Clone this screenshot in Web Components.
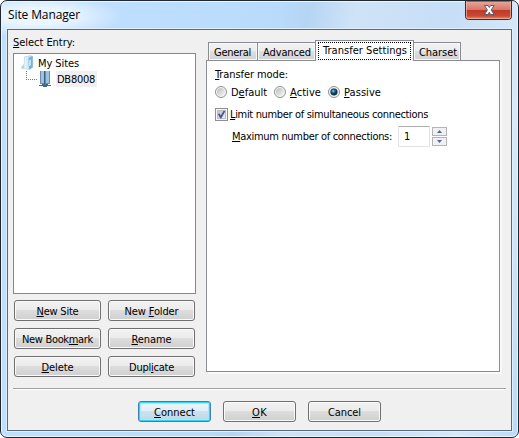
<!DOCTYPE html>
<html lang="en"><head><meta charset="utf-8"><title>Site Manager</title>
<style>html,body{margin:0;width:519px;height:438px;overflow:hidden;background:#fff}</style></head>
<body><site-manager></site-manager>
<script>
const define=(name,html,setup)=>customElements.define(name,class extends HTMLElement{
  connectedCallback(){
    if(this.shadowRoot)return;
    this.attachShadow({mode:'open'}).innerHTML=html;
    if(setup)setup(this,this.shadowRoot);
  }
});

/* Single-line label: tracks its text to the width in "w"; "_" precedes the access key. */
define('ui-label',`<style>:host{display:block;font:11px/16px "DejaVu Sans Condensed","DejaVu Sans",sans-serif;font-stretch:condensed;color:#000;white-space:pre;height:14px}
:host([title-text]){font:12px/16px "Open Sans",sans-serif;height:16px}
span{display:inline-block}u{text-decoration:underline;text-decoration-thickness:1px;text-underline-offset:1px;text-decoration-skip-ink:none}</style><span></span>`,(el,r)=>{
  const s=r.querySelector('span'),t=el.getAttribute('text')||'',w=+el.getAttribute('w');
  s.innerHTML=t.replace(/_(.)/,'<u>$1</u>');
  const n=t.replace('_','').length;
  if(n>1&&w)s.style.letterSpacing=((w-s.getBoundingClientRect().width)/n).toFixed(3)+'px';
  if(w)el.style.width=w+'px';
});

define('ui-button',`<style>:host{display:flex;box-sizing:border-box;height:21px;justify-content:center;padding-top:3px;border:1px solid #707070;border-radius:3px;background:linear-gradient(#f2f2f2,#ebebeb 48%,#dddddd 50%,#cfcfcf);box-shadow:inset 0 0 0 1px #fafafa}
:host([default]){border-color:#3c7fb1;background:linear-gradient(#edf5f9,#e1eff6 48%,#cce3ee 50%,#b9d7e5);box-shadow:inset 0 0 0 1px #35d3f8,inset 0 0 1px 2px #a8e7f8}</style>`,(el,r)=>{
  const l=document.createElement('ui-label');l.setAttribute('text',el.getAttribute('text'));l.setAttribute('w',el.getAttribute('w'));
  r.append(l);
});

define('ui-tab',`<style>:host{display:block;box-sizing:border-box;height:18px;padding:2px 0 0 5px;border:1px solid #898c95;border-bottom:0;margin-left:-1px;background:linear-gradient(#f3f3f3,#ececec 48%,#dfdfdf 50%,#d2d2d2);box-shadow:inset 0 0 0 1px #f7f7f7}
:host([active]){height:21px;padding:1px 2px 2px;background:#fff;z-index:1;margin-bottom:-1px}
:host([active]) div{box-sizing:border-box;height:18px;border:1px dotted #000;padding:0 0 0 4px}</style><div><slot></slot></div>`);

define('ui-radio',`<style>:host{display:flex;gap:4px;height:14px}svg{width:12px;height:12px;margin-top:1px;flex:none}.dot{display:none}:host([checked]) .dot{display:inline}</style>
<svg viewBox="0 0 12 12"><defs><linearGradient id="a" x2="1" y2="1"><stop stop-color="#b8bcc0"/><stop offset="1" stop-color="#f6f6f6"/></linearGradient><radialGradient id="b" cx=".4" cy=".35"><stop stop-color="#9be8ff"/><stop offset=".4" stop-color="#25799f"/><stop offset="1" stop-color="#0b2b48"/></radialGradient></defs><circle cx="6" cy="6" r="5.5" fill="#f7f7f7" stroke="#8e8f8f"/><circle cx="6" cy="6" r="4" fill="url(#a)"/><circle class="dot" cx="6" cy="6" r="3.3" fill="url(#b)" stroke="#15344d" stroke-width=".5"/></svg><slot></slot>`);

define('ui-check',`<style>:host{display:flex;gap:2px;height:14px}svg{width:13px;height:13px;flex:none}</style>
<svg viewBox="0 0 13 13"><defs><linearGradient id="c" x2="1" y2="1"><stop stop-color="#b9bdc4"/><stop offset="1" stop-color="#f4f4f4"/></linearGradient></defs><rect x=".5" y=".5" width="12" height="12" fill="#f6f6f6" stroke="#8e8f8f"/><rect x="2.5" y="2.5" width="8" height="8" fill="url(#c)" stroke="#bcc0c6"/><path d="M3 6.3 4.4 5.3 5.8 7.5 8.8 2.4 10.3 3.2 6.2 10.4 5.3 10.4Z" fill="#40559a"/></svg><slot></slot>`);

define('ui-spinner',`<style>:host{display:grid;grid-template-columns:32px 15px;gap:2px;height:21px}.field{box-sizing:border-box;height:21px;border:1px solid #e2e3ea;border-top-color:#abadb3;border-radius:1px;padding:2px 0 0 5px;background:#fff}.steps{display:grid;grid-template-rows:9px 9px;gap:1px;margin-top:1px;height:19px}svg{display:block;width:15px;height:9px}</style>
<div class="field"><slot></slot></div><div class="steps"><svg viewBox="0 0 15 9"><rect x=".5" y=".5" width="14" height="8" fill="#f1f1f1" stroke="#b4b4b4"/><path d="M5 6 7.5 3 10 6Z" fill="#4565b5"/></svg><svg viewBox="0 0 15 9"><rect x=".5" y=".5" width="14" height="8" fill="#f1f1f1" stroke="#b4b4b4"/><path d="M5 3 7.5 6 10 3Z" fill="#4565b5"/></svg></div>`);

define('site-tree',`<style>:host{display:block;box-sizing:border-box;height:241px;border:1px solid #828790;background:#fff}
.row{display:flex;height:16px}.root{padding:1px 0 0 7px;gap:3px}.root ui-label{margin-top:1px}.child{padding-left:12px}.child svg{margin-right:2px}.sel{background:#f0f0f0;height:16px;width:41px;padding:1px 0 0 1px;box-sizing:border-box}svg{flex:none}</style>
<div class="row root"><svg width="14" height="16" viewBox="0 0 14 16"><defs><linearGradient id="f"><stop stop-color="#f5fbff"/><stop offset=".6" stop-color="#c5e0f1"/><stop offset="1" stop-color="#8fc0e2"/></linearGradient></defs><path d="M0 12 3 9 3 2 6 1 6 13 1 14Z" fill="#b6d4e8"/><path d="M3.5 2 9.5.5 11.5 1.5V12.5L8 14.5 3 13.5Z" fill="url(#f)" stroke="#b4d2e7" stroke-width=".5"/><path d="M7.5 3 11.7 1V12.5L8 14.7Z" fill="#7ab2da"/><path d="M8 5.5 10 4.5V10L8 11.5Z" fill="#c0e2f5"/></svg><ui-label text="My Sites" w="41"></ui-label></div>
<div class="row child"><svg width="28" height="16" viewBox="0 0 28 16"><path d="M.5 0V9M2 8.5H12" fill="none" stroke="#777" stroke-dasharray="1 1"/><rect x="14" y="0" width="10" height="13" fill="#688eae"/><path d="M15 0H18V12H15ZM20 0H23V12H20Z" fill="#9dc2df"/><path d="M18.5 0V14" stroke="#365f82"/><path d="M13 14.5H25M16 13.5H22M17 15.5H21" stroke="#426a8a"/></svg><div class="sel"><ui-label text="DB8008" w="38"></ui-label></div></div>`);

define('settings-panel',`<style>:host{display:block;padding:10px 0 0 10px}.tabs{display:flex;align-items:flex-end;height:20px;padding-left:3px;position:relative}
.general{width:50px}.advanced{width:59px}.active{width:99px}.charset{width:48px}
.panel{box-sizing:border-box;width:294px;height:312px;border:1px solid #898c95;background:#fff;box-shadow:2px 2px 0 #fafafa;padding:6px 0 0 8px}.radios{display:flex;margin-top:4px;height:14px}.radios ui-radio:nth-child(1){width:59px}.radios ui-radio:nth-child(2){width:54px}.radios svg{margin-top:2px}.check{margin-top:9px}.count{display:flex;margin:4px 0 0 17px;gap:6px}.count>ui-label{margin-top:3px}.check ui-label{margin-top:-1px}</style>
<div class="tabs"><ui-tab class="general"><ui-label text="General" w="37"></ui-label></ui-tab><ui-tab class="advanced"><ui-label text="Advanced" w="48"></ui-label></ui-tab><ui-tab active class="active"><ui-label text="Transfer Settings" w="84"></ui-label></ui-tab><ui-tab class="charset"><ui-label text="Charset" w="38"></ui-label></ui-tab></div>
<div class="panel"><ui-label text="_Transfer mode:" w="73"></ui-label><div class="radios"><ui-radio><ui-label text="D_efault" w="36"></ui-label></ui-radio><ui-radio><ui-label text="_Active" w="31"></ui-label></ui-radio><ui-radio checked><ui-label text="_Passive" w="37"></ui-label></ui-radio></div>
<ui-check class="check"><ui-label text="_Limit number of simultaneous connections" w="198"></ui-label></ui-check>
<div class="count"><ui-label text="_Maximum number of connections:" w="160"></ui-label><ui-spinner><ui-label text="1"></ui-label></ui-spinner></div></div>`);

define('site-manager',`<style>:host{display:block;box-sizing:border-box;width:519px;height:438px;border:1px solid #1f2731;border-radius:7px;padding:0 6px 6px;box-shadow:inset 0 0 0 1px #e9f6ff;background:radial-gradient(ellipse 85px 22px at 36px 15px,#e9f5ff 40%,transparent),linear-gradient(100deg,#bfdfff 0 15%,#b8dbfc 47%,#b5d5f3 52%,#cfe3f7 60%,#c6def6 76%,#d7e9fb 90%,#b9dafa)}
header{height:28px;display:flex;justify-content:space-between}header ui-label{margin:6px 0 0 1px}header svg{width:48px;height:20px}
main{box-sizing:border-box;width:505px;height:402px;background:#f0f0f0;border:1px solid #5d6b79;box-shadow:0 0 0 1px #e0effc;padding:0 5px}
.body{display:grid;grid-template-columns:183px 1fr;padding-top:0;height:358px}.left{padding-top:5px}.left site-tree{margin-top:4px}.grid{display:grid;grid-template-columns:87px 87px;column-gap:7px;row-gap:7px;margin:6px 0 0 1px}
.left ui-button{height:21px}.line{height:1px;background:#a0a0a0;box-shadow:0 1px #fff}.actions{display:grid;grid-template-columns:73px 73px 73px;gap:12px;justify-content:start;margin:12px 0 0 125px}</style>
<header><ui-label title-text text="Site Manager" w="72"></ui-label><svg viewBox="0 0 48 20"><defs><linearGradient id="r" x2="0" y2="1"><stop stop-color="#e9aa9c"/><stop offset=".46" stop-color="#d6786a"/><stop offset=".48" stop-color="#bd392a"/><stop offset=".8" stop-color="#c94732"/><stop offset="1" stop-color="#ec9270"/></linearGradient></defs><path d="M1.5 0V15.5Q1.5 18.5 4.5 18.5H44.5Q47.5 18.5 47.5 15.5V0Z" fill="url(#r)" stroke="#581e24"/><path d="M2.5 0V15.5Q2.5 17.5 4.5 17.5H44.5Q46.5 17.5 46.5 15.5V0" fill="none" stroke="#f1b9a8" stroke-opacity=".7"/><path d="M20.5 4.5H24L25.3 6.5 26.6 4.5H30L27.3 8.9 30 13.5H26.6L25.3 11.3 24 13.5H20.5L23.4 8.9Z" fill="#fff" stroke="#565d70"/></svg></header>
<main><div class="body"><div class="left"><ui-label text="_Select Entry:" w="62"></ui-label><site-tree></site-tree><div class="grid">
<ui-button text="_New Site" w="42"></ui-button><ui-button text="New _Folder" w="54"></ui-button><ui-button text="New Book_mark" w="71"></ui-button><ui-button text="_Rename" w="40"></ui-button><ui-button text="_Delete" w="32"></ui-button><ui-button text="Dupl_icate" w="45"></ui-button></div></div><settings-panel></settings-panel></div><div class="line"></div>
<div class="actions"><ui-button default text="_Connect" w="41"></ui-button><ui-button text="_OK" w="15"></ui-button><ui-button text="Cancel" w="33"></ui-button></div></main>`);
</script></body></html>
